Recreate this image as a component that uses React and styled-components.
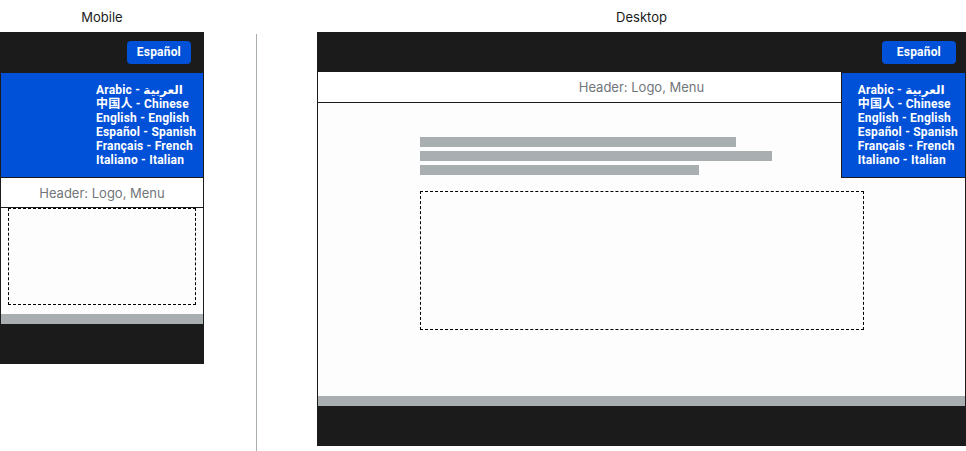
import React from "react"
import styled, { createGlobalStyle } from "styled-components"

const colors = {
  ink: "#1b1b1b",
  blue: "#0050d8",
  gray: "#a9aeb1",
  muted: "#71767a",
  paper: "#fdfdfd",
}

const languages = [
  ["Arabic", "العربية"],
  ["中国人", "Chinese"],
  ["English", "English"],
  ["Español", "Spanish"],
  ["Français", "French"],
  ["Italiano", "Italian"],
]

const GlobalStyle = createGlobalStyle`
  body {
    margin: 0;
    background: #fff;
    font-family: Inter, "Noto Sans", "Noto Sans CJK SC", "DejaVu Sans", sans-serif;
  }
`

const Canvas = styled.div`
  display: flex;
  width: 966px;
  height: 451px;
  overflow: hidden;
`

const Column = styled.section`
  display: flex;
  flex-direction: column;
  width: ${(p) => p.width}px;
  flex-shrink: 0;
`

const Label = styled.div`
  height: 32px;
  line-height: 34px;
  text-align: center;
  font-size: 13px;
  color: ${colors.ink};
`

const Divider = styled.div`
  width: 1px;
  margin: 34px 60px 0 52px;
  background: ${colors.gray};
`

const Frame = styled.div`
  position: relative;
  display: flex;
  flex-direction: column;
  height: ${(p) => p.height}px;
  background: ${colors.paper};
  border-left: 1px solid ${colors.ink};
  border-right: 1px solid ${colors.ink};
`

const TopBar = styled.div`
  display: flex;
  justify-content: flex-end;
  align-items: center;
  height: 40px;
  padding-right: ${(p) => p.inset}px;
  background: ${colors.ink};
`

const LangButton = styled.button`
  height: 23px;
  padding: 0 ${(p) => p.pad}px;
  border: 0;
  border-radius: 4px;
  background: ${colors.blue};
  color: #fff;
  font: 700 12px Roboto, "Noto Sans", sans-serif;
  letter-spacing: 0.2px;
`

const LangPanel = styled.ul`
  margin: 0;
  list-style: none;
  padding: 10px 7px 10px 16px;
  background: ${colors.blue};
  border: 1px solid ${colors.ink};
  color: #fff;
  font: 700 12px/14px Roboto, "Noto Sans CJK SC", "DejaVu Sans", sans-serif;
  letter-spacing: 0.2px;
  white-space: nowrap;
  ${(p) =>
    p.floating
      ? `position: absolute; top: 40px; right: -1px; z-index: 2;`
      : `display: flex; flex-direction: column; align-items: flex-start; padding-left: 95px; margin: 0 -1px;`}
`

const Header = styled.header`
  height: ${(p) => p.height}px;
  flex-shrink: 0;
  display: flex;
  align-items: center;
  justify-content: center;
  background: #fff;
  border-bottom: 1px solid ${colors.ink};
  color: ${colors.muted};
  font-size: 13px;
`

const Main = styled.main`
  flex: 1;
  padding: ${(p) => p.pad};
  display: flex;
  flex-direction: column;
`

const Column444 = styled.div`
  width: 444px;
  margin: 0 auto;
  display: flex;
  flex-direction: column;
  gap: 4px;
`

const TextBar = styled.div`
  height: 10px;
  background: ${colors.gray};
`

const Placeholder = styled.div`
  height: ${(p) => p.height}px;
  margin-top: ${(p) => p.offset}px;
  border: 1px dashed #000;
  box-sizing: border-box;
`

const GrayStrip = styled.div`
  height: 10px;
  flex-shrink: 0;
  background: ${colors.gray};
`

const Footer = styled.footer`
  height: 40px;
  flex-shrink: 0;
  background: ${colors.ink};
  margin: 0 -1px;
`

function Languages({ floating }) {
  return (
    <LangPanel floating={floating}>
      {languages.map(([native, english]) => (
        <li key={english}>
          {native} - {english}
        </li>
      ))}
    </LangPanel>
  )
}

export default function App() {
  return (
    <Canvas>
      <GlobalStyle />
      <Column width={204}>
        <Label>Mobile</Label>
        <Frame height={332}>
          <TopBar inset={12}>
            <LangButton pad={10}>Español</LangButton>
          </TopBar>
          <Languages />
          <Header height={29}>Header: Logo, Menu</Header>
          <Main pad="0 7px 9px">
            <Placeholder height={97} offset={0} />
          </Main>
          <GrayStrip />
          <Footer />
        </Frame>
      </Column>
      <Divider />
      <Column width={649}>
        <Label>Desktop</Label>
        <Frame height={414}>
          <TopBar inset={9}>
            <LangButton pad={15}>Español</LangButton>
          </TopBar>
          <Languages floating />
          <Header height={30}>Header: Logo, Menu</Header>
          <Main pad="34px 0 0">
            <Column444>
              <TextBar style={{ width: 316 }} />
              <TextBar style={{ width: 352 }} />
              <TextBar style={{ width: 279 }} />
              <Placeholder height={139} offset={12} />
            </Column444>
          </Main>
          <GrayStrip />
          <Footer />
        </Frame>
      </Column>
    </Canvas>
  )
}
